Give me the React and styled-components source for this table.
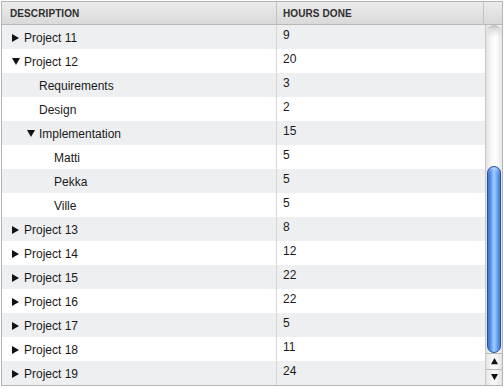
import React from "react";
import styled, { createGlobalStyle } from "styled-components";

const GlobalStyle = createGlobalStyle`
  html, body {
    margin: 0;
    padding: 0;
    background: #fff;
    font-family: "Liberation Sans", Arial, sans-serif;
  }
`;

const rows = [
  { name: "Project 11", hours: 9, level: 0, toggle: "closed" },
  { name: "Project 12", hours: 20, level: 0, toggle: "open" },
  { name: "Requirements", hours: 3, level: 1 },
  { name: "Design", hours: 2, level: 1 },
  { name: "Implementation", hours: 15, level: 1, toggle: "open" },
  { name: "Matti", hours: 5, level: 2 },
  { name: "Pekka", hours: 5, level: 2 },
  { name: "Ville", hours: 5, level: 2 },
  { name: "Project 13", hours: 8, level: 0, toggle: "closed" },
  { name: "Project 14", hours: 12, level: 0, toggle: "closed" },
  { name: "Project 15", hours: 22, level: 0, toggle: "closed" },
  { name: "Project 16", hours: 22, level: 0, toggle: "closed" },
  { name: "Project 17", hours: 5, level: 0, toggle: "closed" },
  { name: "Project 18", hours: 11, level: 0, toggle: "closed" },
  { name: "Project 19", hours: 24, level: 0, toggle: "closed" },
];

const Table = styled.div`
  margin: 1px 0 0 1px;
  width: 500px;
  border: 1px solid #b4b4b4;
  display: flex;
  flex-direction: column;
`;

const Header = styled.div`
  display: grid;
  grid-template-columns: 275px 207px 16px;
  height: 22px;
  border-bottom: 1px solid #b9b9b9;
  background: linear-gradient(#ececec, #d9d9d9);
`;

const HeadCell = styled.div`
  display: flex;
  align-items: center;
  padding-left: ${(p) => p.$pad || 0}px;
  border-right: ${(p) => (p.$last ? "none" : "1px solid #c2c2c2")};
  font-size: 10px;
  font-weight: bold;
  color: #2e2e2e;
  letter-spacing: 0.1px;
`;

const Body = styled.div`
  display: flex;
`;

const Rows = styled.div`
  width: 483px;
`;

const Row = styled.div`
  display: grid;
  grid-template-columns: 275px 1fr;
  height: 24px;
  background: ${(p) => (p.$alt ? "#eeeff1" : "#fff")};
`;

const DescCell = styled.div`
  display: flex;
  align-items: center;
  padding-left: ${(p) => 10 + p.$level * 15}px;
  padding-top: 2px;
  border-right: 1px solid #d6d6d6;
  font-size: 12px;
  color: #1a1a1a;
`;

const Toggle = styled.span`
  width: 12px;
  display: inline-flex;
  align-items: center;
`;

const Spacer = styled.span`
  width: 12px;
`;

const HoursCell = styled.div`
  padding-left: 6px;
  padding-top: 3px;
  line-height: 15px;
  font-size: 12px;
  color: #1a1a1a;
`;

const Scrollbar = styled.div`
  width: 16px;
  border-left: 1px solid #c8c8c8;
  display: flex;
  flex-direction: column;
  background: linear-gradient(90deg, #e2e2e2, #f8f8f8 35%, #ffffff 60%, #e6e6e6);
`;

const Track = styled.div`
  flex: 1;
  display: flex;
  flex-direction: column;
  background: linear-gradient(#b8b8b8 0px, #dedede 4px, transparent 12px);
  border-radius: 8px 8px 0 0;
`;

const Thumb = styled.div`
  margin: 141px 1px 0 1px;
  height: 185px;
  border: 1px solid #24509c;
  border-radius: 8px;
  background:
    linear-gradient(90deg, #2a5ec4 0%, #5b9af0 25%, #a5cdfb 50%, #6aa8f4 75%, #3168cf 100%);
  box-shadow: inset 0 2px 3px rgba(255, 255, 255, 0.35);
`;

const ArrowButton = styled.div`
  height: 15px;
  border-top: 1px solid #b8b8b8;
  display: flex;
  align-items: center;
  justify-content: center;
  background: linear-gradient(90deg, #e6e6e6, #fbfbfb 50%, #e4e4e4);
`;

const Triangle = ({ dir, size = 8 }) => {
  const d = {
    right: "M0 0 L7 4 L0 8 Z",
    down: "M0 0 L8 0 L4 7 Z",
    up: "M0 7 L4 0 L8 7 Z",
  }[dir];
  return (
    <svg width={size} height={size} viewBox="0 0 8 8">
      <path d={d} fill="#111" />
    </svg>
  );
};

export default function App() {
  return (
    <>
      <GlobalStyle />
      <Table>
        <Header>
          <HeadCell $pad={8}>DESCRIPTION</HeadCell>
          <HeadCell $pad={6}>HOURS DONE</HeadCell>
          <HeadCell $last />
        </Header>
        <Body>
          <Rows>
            {rows.map((r, i) => (
              <Row key={r.name} $alt={i % 2 === 0}>
                <DescCell $level={r.level}>
                  {r.toggle ? (
                    <Toggle>
                      <Triangle dir={r.toggle === "open" ? "down" : "right"} />
                    </Toggle>
                  ) : (
                    <Spacer />
                  )}
                  {r.name}
                </DescCell>
                <HoursCell>{r.hours}</HoursCell>
              </Row>
            ))}
          </Rows>
          <Scrollbar>
            <Track>
              <Thumb />
            </Track>
            <ArrowButton>
              <Triangle dir="up" size={7} />
            </ArrowButton>
            <ArrowButton>
              <Triangle dir="down" size={7} />
            </ArrowButton>
          </Scrollbar>
        </Body>
      </Table>
    </>
  );
}
